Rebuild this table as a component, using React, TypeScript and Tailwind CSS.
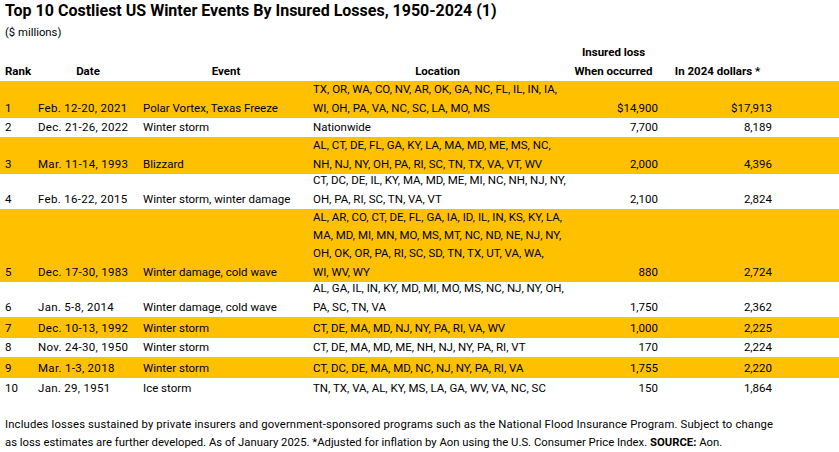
const rows = [
  { rank: "1", date: "Feb. 12-20, 2021", event: "Polar Vortex, Texas Freeze", loc: ["TX, OR, WA, CO, NV, AR, OK, GA, NC, FL, IL, IN, IA,", "WI, OH, PA, VA, NC, SC, LA, MO, MS"], occurred: "$14,900", adjusted: "$17,913", h: "h-[37px]", gold: true },
  { rank: "2", date: "Dec. 21-26, 2022", event: "Winter storm", loc: ["Nationwide"], occurred: "7,700", adjusted: "8,189", h: "h-[19px]", gold: false },
  { rank: "3", date: "Mar. 11-14, 1993", event: "Blizzard", loc: ["AL, CT, DE, FL, GA, KY, LA, MA, MD, ME, MS, NC,", "NH, NJ, NY, OH, PA, RI, SC, TN, TX, VA, VT, WV"], occurred: "2,000", adjusted: "4,396", h: "h-[37px]", gold: true },
  { rank: "4", date: "Feb. 16-22, 2015", event: "Winter storm, winter damage", loc: ["CT, DC, DE, IL, KY, MA, MD, ME, MI, NC, NH, NJ, NY,", "OH, PA, RI, SC, TN, VA, VT"], occurred: "2,100", adjusted: "2,824", h: "h-[35px]", gold: false },
  { rank: "5", date: "Dec. 17-30, 1983", event: "Winter damage, cold wave", loc: ["AL, AR, CO, CT, DE, FL, GA, IA, ID, IL, IN, KS, KY, LA,", "MA, MD, MI, MN, MO, MS, MT, NC, ND, NE, NJ, NY,", "OH, OK, OR, PA, RI, SC, SD, TN, TX, UT, VA, WA,", "WI, WV, WY"], occurred: "880", adjusted: "2,724", h: "h-[73px]", gold: true },
  { rank: "6", date: "Jan. 5-8, 2014", event: "Winter damage, cold wave", loc: ["AL, GA, IL, IN, KY, MD, MI, MO, MS, NC, NJ, NY, OH,", "PA, SC, TN, VA"], occurred: "1,750", adjusted: "2,362", h: "h-[35px]", gold: false },
  { rank: "7", date: "Dec. 10-13, 1992", event: "Winter storm", loc: ["CT, DE, MA, MD, NJ, NY, PA, RI, VA, WV"], occurred: "1,000", adjusted: "2,225", h: "h-[21px]", gold: true },
  { rank: "8", date: "Nov. 24-30, 1950", event: "Winter storm", loc: ["CT, DE, MA, MD, ME, NH, NJ, NY, PA, RI, VT"], occurred: "170", adjusted: "2,224", h: "h-[19px]", gold: false },
  { rank: "9", date: "Mar. 1-3, 2018", event: "Winter storm", loc: ["CT, DC, DE, MA, MD, NC, NJ, NY, PA, RI, VA"], occurred: "1,755", adjusted: "2,220", h: "h-[21px]", gold: true },
  { rank: "10", date: "Jan. 29, 1951", event: "Ice storm", loc: ["TN, TX, VA, AL, KY, MS, LA, GA, WV, VA, NC, SC"], occurred: "150", adjusted: "1,864", h: "h-[20px]", gold: false },
];

export default function App() {
  return (
    <div className="w-[839px] h-[452px] bg-white text-black overflow-hidden pt-[1px] font-['Roboto',sans-serif]">
      <h1 className="pl-[5px] text-[16px] font-bold leading-[20px] whitespace-nowrap">
        Top 10 Costliest US Winter Events By Insured Losses, 1950-2024 (1)
      </h1>
      <p className="pl-[5px] pt-[2px] text-[11.3px] leading-[20px]">($ millions)</p>

      {/* header */}
      <div className="flex text-[11.5px] font-bold leading-[18px]">
        <div className="w-[561px]" />
        <div className="w-[105px] text-center">Insured loss</div>
      </div>
      <div className="flex pt-[1px] text-[11.5px] font-bold leading-[19px] whitespace-nowrap">
        <div className="w-[38px] pl-[5px]">Rank</div>
        <div className="w-[100px] text-center">Date</div>
        <div className="w-[176px] text-center">Event</div>
        <div className="w-[247px] text-center">Location</div>
        <div className="w-[105px] text-center">When occurred</div>
        <div className="w-[103px] text-center">In 2024 dollars *</div>
      </div>

      {/* body */}
      <div className="text-[11.5px] leading-[18.3px] whitespace-nowrap">
        {rows.map((r) => (
          <div key={r.rank} className={`flex items-end pb-[1px] ${r.h} ${r.gold ? "bg-[#ffc000]" : "bg-white"}`}>
            <div className="w-[38px] pl-[5px]">{r.rank}</div>
            <div className="w-[105px] tracking-[0.3px]">{r.date}</div>
            <div className="w-[170px]">{r.event}</div>
            <div className="w-[260px] flex flex-col">
              {r.loc.map((l, i) => (
                <span key={i}>{l}</span>
              ))}
            </div>
            <div className="w-[85px] text-right">{r.occurred}</div>
            <div className="w-[114px] text-right">{r.adjusted}</div>
          </div>
        ))}
      </div>

      <div className="mt-[18px] pl-[5px] text-[11.3px] leading-[18px] whitespace-nowrap">
        <span className="tracking-[0.15px]">
          Includes losses sustained by private insurers and government-sponsored programs such as the National Flood Insurance Program. Subject to change
        </span>
        <br />
        as loss estimates are further developed. As of January 2025. *Adjusted for inflation by Aon using the U.S. Consumer Price Index.{" "}
        <b>SOURCE:</b> Aon.
      </div>
    </div>
  );
}
